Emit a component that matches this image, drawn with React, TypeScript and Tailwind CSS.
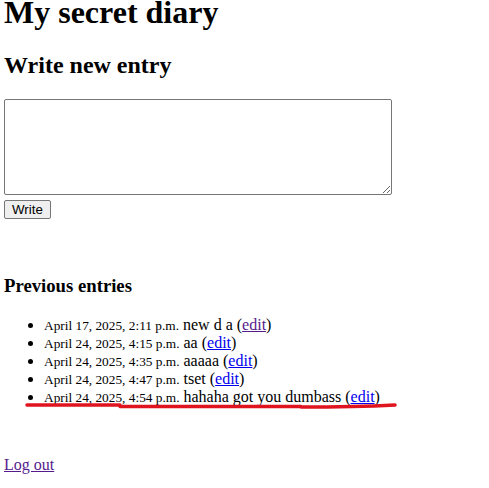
const entries = [
  { date: "April 17, 2025, 2:11 p.m.", text: "new d a", visited: true },
  { date: "April 24, 2025, 4:15 p.m.", text: "aa" },
  { date: "April 24, 2025, 4:35 p.m.", text: "aaaaa" },
  { date: "April 24, 2025, 4:47 p.m.", text: "tset" },
  { date: "April 24, 2025, 4:54 p.m.", text: "hahaha got you dumbass" },
];

export default function App() {
  return (
    <div className="relative min-h-[488px] bg-white px-[4px] pt-px font-['Liberation_Serif',serif] text-black">
      <h1 className="-mt-[7px] text-[32px] font-bold leading-[37px]">My secret diary</h1>

      <h2 className="mt-[20px] text-[24px] font-bold leading-[28px]">Write new entry</h2>

      <form className="mt-[20px]">
        <textarea className="block h-[96px] w-[388px] resize rounded-[2px] border border-[#767676] bg-white" />
        <button
          type="button"
          className="mt-[5px] block rounded-[2px] border border-[#767676] bg-[#efefef] px-[7px] py-[1px] font-['Liberation_Sans',sans-serif] text-[13.33px] leading-[15px]"
        >
          Write
        </button>
      </form>

      <h3 className="mt-[56px] text-[18.72px] font-bold leading-[22px]">Previous entries</h3>

      <ul className="mt-[19px] list-disc pl-[40px] text-[16px] leading-[18px]">
        {entries.map((e, i) => (
          <li key={i} className="h-[18px]">
            <small className="text-[13.33px] leading-none">{e.date}</small> {e.text} (
            <a href="#" className={e.visited ? "text-[#551a8b] underline" : "text-[#0000ee] underline"}>
              edit
            </a>
            )
          </li>
        ))}
      </ul>

      <a href="#" className="mt-[50px] inline-block text-[16px] leading-[18px] text-[#551a8b] underline">
        Log out
      </a>

      {/* red marker line drawn under the last entry */}
      <svg className="pointer-events-none absolute left-[25px] top-[400px]" width="374" height="12" viewBox="0 0 374 12">
        <path
          d="M2 5 L 95 5 M 95 6.5 L 276 6.5 M 276 7 C 320 7, 350 6, 370 5"
          fill="none"
          stroke="#e0141e"
          strokeWidth="3.5"
          strokeLinecap="round"
        />
      </svg>
    </div>
  );
}
